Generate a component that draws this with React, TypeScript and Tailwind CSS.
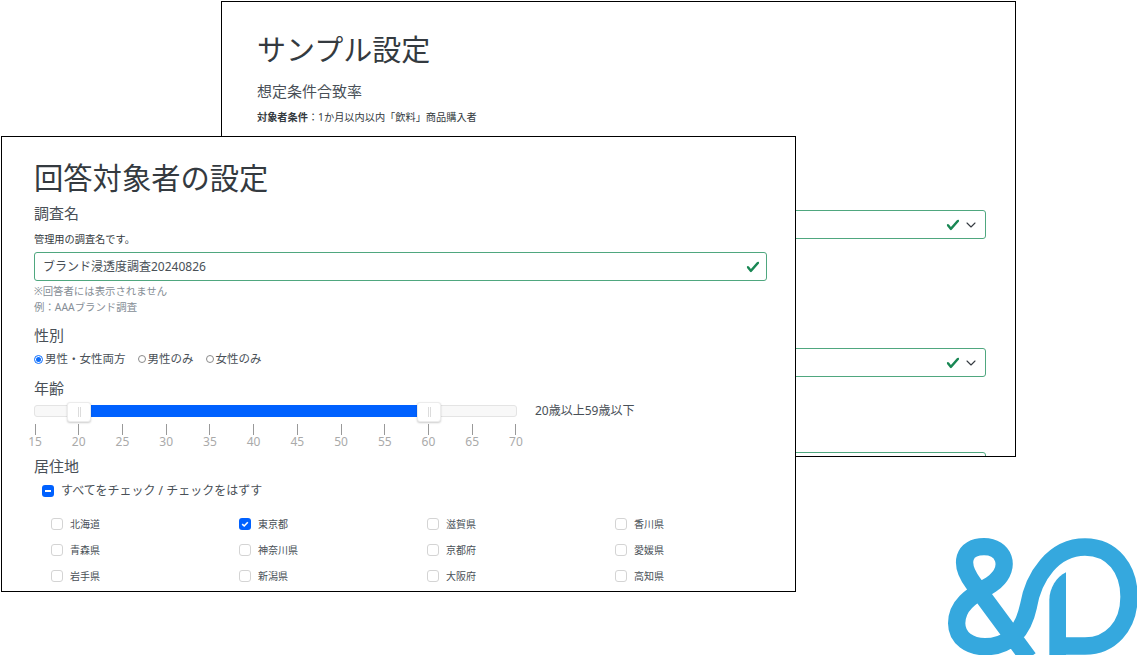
import { ChevronDown } from 'lucide-react'

const FONT = 'font-["Noto_Sans","Noto_Sans_CJK_JP",sans-serif]'

const AGES = [15, 20, 25, 30, 35, 40, 45, 50, 55, 60, 65, 70]

const PREFS = [
  { name: '北海道' }, { name: '東京都', checked: true }, { name: '滋賀県' }, { name: '香川県' },
  { name: '青森県' }, { name: '神奈川県' }, { name: '京都府' }, { name: '愛媛県' },
  { name: '岩手県' }, { name: '新潟県' }, { name: '大阪府' }, { name: '高知県' }
]

function ValidCheck() {
  return (
    <svg viewBox="0 0 8 8" className="h-[14px] w-[14px] shrink-0 text-[#198754]">
      <path
        fill="currentColor"
        d="M2.3 6.73.6 4.53c-.4-1.04.46-1.4 1.1-.8l1.1 1.4 3.4-3.8c.6-.63 1.6-.27 1.2.7l-4 4.6c-.43.5-.8.4-1.1.1z"
      />
    </svg>
  )
}

function SelectBox({ className }: { className: string }) {
  return (
    <div className={`flex h-[29px] items-center justify-end gap-[3px] rounded-[3px] border border-[#4fa77f] pr-[6px] ${className}`}>
      <ValidCheck />
      <ChevronDown className="h-[16px] w-[16px] text-[#343a40]" strokeWidth={1.6} />
    </div>
  )
}

function Radio({ label, on }: { label: string; on?: boolean }) {
  return (
    <span className="flex items-center gap-[2px]">
      {on ? (
        <span className="flex h-[9px] w-[9px] items-center justify-center rounded-full border border-[#0d6efd]">
          <span className="h-[5px] w-[5px] rounded-full bg-[#0d6efd]" />
        </span>
      ) : (
        <span className="h-[8px] w-[8px] rounded-full border border-[#8a8a8a]" />
      )}
      <span>{label}</span>
    </span>
  )
}

function Thumb({ className }: { className: string }) {
  return (
    <span className={`absolute top-[-4px] flex h-[20px] w-[24px] items-center justify-center gap-[1px] rounded-[3px] border border-[#ececec] bg-white shadow-[0_1px_2px_rgba(0,0,0,0.2)] ${className}`}>
      <span className="h-[10px] w-px bg-[#dcdcdc]" />
      <span className="h-[10px] w-px bg-[#dcdcdc]" />
    </span>
  )
}

function AmpDLogo() {
  return (
    <svg viewBox="0 0 621 405" className="absolute left-[930px] top-[520px] h-[135px] w-[207px]">
      <path
        fill="none"
        stroke="#35a8de"
        strokeWidth="52"
        d="M296 415 L130 190 C85 130 100 80 162 80 C222 80 245 140 195 185 C165 212 80 235 80 310 C80 355 120 380 165 380 C240 380 280 330 295 260 C310 170 370 81 465 81 C550 81 597 150 597 230 C597 320 540 378 465 378 L384 378"
      />
      <path fill="#35a8de" d="M358 405 L358 240 C358 205 380 170 408 157 L408 405 Z" />
    </svg>
  )
}

export default function App() {
  return (
    <div className={`relative h-[655px] w-[1137px] overflow-hidden bg-white ${FONT}`}>
      {/* back window */}
      <section className="absolute left-[221px] top-[1px] h-[456px] w-[795px] overflow-hidden border border-black bg-white pl-[35px] pr-[29px] pt-[33px]">
        <h1 className="h-[30px] text-[29px] leading-[30px] text-[#343a40]">サンプル設定</h1>
        <h2 className="mt-[17px] h-[18px] text-[15px] leading-[18px] text-[#495057]">想定条件合致率</h2>
        <p className="mt-[10px] h-[14px] text-[10.2px] leading-[14px] text-[#343a40]">
          <b>対象者条件</b>：1か月以内以内「飲料」商品購入者
        </p>
        <SelectBox className="mt-[86px]" />
        <SelectBox className="mt-[109px]" />
        <SelectBox className="mt-[75px]" />
      </section>

      {/* front window */}
      <section className="absolute left-[1px] top-[136px] h-[456px] w-[795px] overflow-hidden border border-black bg-white pl-[32px] pr-[28px] pt-[26px]">
        <h1 className="h-[30px] text-[29.3px] leading-[30px] text-[#343a40]">回答対象者の設定</h1>
        <h2 className="mt-[11px] h-[18px] text-[15px] leading-[18px] text-[#495057]">調査名</h2>
        <p className="mt-[10px] h-[14px] text-[10.2px] leading-[14px] text-[#343a40]">管理用の調査名です。</p>
        <div className="mt-[6px] flex h-[29px] items-center justify-between rounded-[3px] border border-[#4fa77f] pl-[8px] pr-[6px] text-[12px] text-[#495057]">
          <span>ブランド浸透度調査20240826</span>
          <ValidCheck />
        </div>
        <p className="mt-[2px] h-[16px] text-[10.4px] leading-[16px] text-[#868e96]">※回答者には表示されません</p>
        <p className="h-[16px] text-[10.4px] leading-[16px] text-[#868e96]">例：AAAブランド調査</p>

        <h2 className="mt-[11px] h-[18px] text-[15px] leading-[18px] text-[#495057]">性別</h2>
        <div className="mt-[7px] flex h-[16px] items-center gap-[12px] text-[11.5px] text-[#495057]">
          <Radio label="男性・女性両方" on />
          <Radio label="男性のみ" />
          <Radio label="女性のみ" />
        </div>

        <h2 className="mt-[12px] h-[18px] text-[15px] leading-[18px] text-[#495057]">年齢</h2>
        <div className="mt-[8px] flex h-[12px] items-center">
          <div className="relative h-[12px] w-[483px] rounded-[3px] border border-[#e4e4e4] bg-[#f8f8f8]">
            <div className="absolute bottom-[-1px] left-[56px] top-[-1px] w-[327px] bg-[#0061ff]" />
            <Thumb className="left-[32px]" />
            <Thumb className="left-[382px]" />
          </div>
          <span className="ml-[18px] text-[12px] leading-[12px] text-[#495057]">20歳以上59歳以下</span>
        </div>
        <div className="mt-[7px] flex w-[482px] justify-between pl-[1px]">
          {AGES.map((age) => (
            <div key={age} className="flex w-0 flex-col items-center">
              <span className="h-[11px] w-px shrink-0 bg-[#999]" />
              <span className="h-[13px] text-[12px] leading-[13px] text-[#aaaaaa]">{age}</span>
            </div>
          ))}
        </div>

        <h2 className="mt-[9px] h-[18px] text-[15px] leading-[18px] text-[#495057]">居住地</h2>
        <div className="ml-[8px] mt-[8px] flex h-[16px] items-center gap-[7px] text-[12px] text-[#495057]">
          <span className="flex h-[12px] w-[12px] items-center justify-center rounded-[3px] bg-[#0061ff]">
            <span className="h-[2px] w-[6px] bg-white" />
          </span>
          <span>すべてをチェック / チェックをはずす</span>
        </div>
        <div className="ml-[17px] mt-[17px] grid w-[752px] grid-cols-4 gap-y-[10px]">
          {PREFS.map((p) => (
            <label key={p.name} className="flex h-[16px] items-center gap-[7px] text-[10px] text-[#495057]">
              {p.checked ? (
                <span className="flex h-[12px] w-[12px] items-center justify-center rounded-[3px] bg-[#0061ff]">
                  <svg viewBox="0 0 12 12" className="h-[12px] w-[12px]">
                    <path d="M3.2 6.2 L5.2 8 L8.8 4.2" fill="none" stroke="#fff" strokeWidth="1.6" />
                  </svg>
                </span>
              ) : (
                <span className="h-[12px] w-[12px] rounded-[3px] border border-[#d4d4d4] bg-white" />
              )}
              <span>{p.name}</span>
            </label>
          ))}
        </div>
      </section>

      <AmpDLogo />
    </div>
  )
}
